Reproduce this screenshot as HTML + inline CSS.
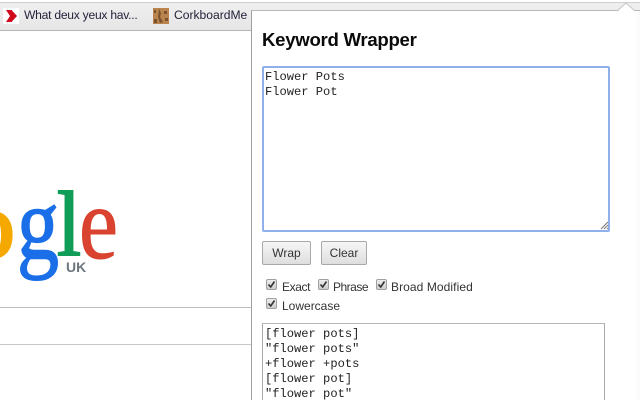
<!DOCTYPE html>
<html><head><meta charset="utf-8">
<style>
html,body{margin:0;padding:0;width:640px;height:400px;overflow:hidden;background:#fff;font-family:"Liberation Sans",sans-serif;color:#222}
#p{position:relative;width:640px;height:400px;overflow:hidden;background:#fff}
.a{position:absolute;white-space:pre}
.mono{font-family:"Liberation Mono",monospace;font-size:12.1px;line-height:15px;color:#222}
.btn{position:absolute;top:241px;height:24px;box-sizing:border-box;border:1px solid #a8a8a8;border-radius:2px;background:linear-gradient(#f6f6f6,#dedede);font-size:12px;line-height:23px;text-align:center;color:#333}
.cb{position:absolute;width:11px;height:11px;box-sizing:border-box;border:1px solid #a0a0a0;border-radius:2px;background:linear-gradient(#eee,#ccc)}
.cb svg{position:absolute;left:0;top:0}
.lb{position:absolute;font-size:12px;line-height:15px;color:#333;white-space:pre}
</style></head><body><div id="p">
<div class="a" style="left:0;top:2px;width:640px;height:1px;background:#cfcfcf"></div>
<div class="a" style="left:0;top:3px;width:640px;height:27px;background:linear-gradient(#efefef,#e6e6e6)"></div>
<div class="a" style="left:0;top:30px;width:640px;height:1px;background:#b4b4b4"></div>

<svg class="a" style="left:3px;top:8px" width="16" height="16" viewBox="0 0 16 16"><rect width="16" height="16" fill="#fff"/><path d="M3 2H8.5L14 8 8.5 14H3L7 8Z" fill="#d0081c"/></svg>
<div class="a" style="left:24px;top:8px;font-size:12.1px;line-height:15px;color:#23233a;letter-spacing:-.25px">What deux yeux hav...</div>
<svg class="a" style="left:153px;top:8px" width="16" height="16" viewBox="0 0 16 16"><rect width="16" height="16" fill="#b9844e"/><path d="M6 1l2 4-1 4 3 5-3 1-2-6zM11 3h3v3h-3zM1 11h3v4H1zM1 2h2v3H1zM12 10h3v3h-3z" fill="#7a5230"/></svg>
<div class="a" style="left:174px;top:8px;font-size:12.1px;line-height:15px;color:#23233a">CorkboardMe -</div>

<svg class="a" style="left:0;top:180px" width="130" height="105" viewBox="0 0 130 105">
<text x="-40" y="78" font-family="Liberation Serif" font-size="100" fill="#f5a800" stroke="#f5a800" stroke-width="1.5" textLength="56" lengthAdjust="spacingAndGlyphs">o</text>
<text x="17" y="78" font-family="Liberation Serif" font-size="103" fill="#1a6fe8" stroke="#1a6fe8" stroke-width="1.5" textLength="42" lengthAdjust="spacingAndGlyphs">g</text>
<text x="57" y="75" font-family="Liberation Serif" font-size="92" fill="#0f9d58" stroke="#0f9d58" stroke-width="2" textLength="24" lengthAdjust="spacingAndGlyphs">l</text>
<text x="79" y="78" font-family="Liberation Serif" font-size="103" fill="#d9432f" stroke="#d9432f" stroke-width="1" textLength="39" lengthAdjust="spacingAndGlyphs">e</text>
<text x="66" y="92" font-family="Liberation Sans" font-weight="bold" font-size="14" fill="#6d7680">UK</text>
</svg>

<div class="a" style="left:0;top:307px;width:252px;height:1px;background:#bdbdbd"></div>
<div class="a" style="left:0;top:344px;width:252px;height:1px;background:#c8c8c8"></div>

<div class="a" style="left:251px;top:10px;width:389px;height:390px;background:#fff;border-left:1px solid #a0a0a0;border-top:1px solid #b8b8b8;box-sizing:border-box"></div>
<div class="a" style="left:623px;top:11px;width:17px;height:389px;background:linear-gradient(90deg,#fff 60%,#fafafa)"></div>
<svg class="a" style="left:617px;top:3px" width="18" height="9" viewBox="0 0 18 9"><path d="M0 9L9 0 18 9Z" fill="#fff"/><path d="M0 8L9 0 18 8" fill="none" stroke="#c4c4c4"/></svg>

<div class="a" style="left:262px;top:29px;font-size:18.6px;line-height:22px;font-weight:bold;color:#0a0a0a;letter-spacing:-.28px">Keyword Wrapper</div>

<div class="a" style="left:262px;top:66px;width:348px;height:166px;box-sizing:border-box;border:2px solid #8fb0ea;border-radius:2px"></div>
<div class="a mono" style="left:265px;top:70px">Flower Pots
Flower Pot</div>
<svg class="a" style="left:600px;top:221px" width="9" height="9" viewBox="0 0 9 9"><path d="M1 8L8 1M4 8L8 4M7 8L8 7" stroke="#777" stroke-width="1" fill="none"/></svg>

<div class="btn" style="left:262px;width:49px">Wrap</div>
<div class="btn" style="left:321px;width:46px">Clear</div>

<div class="cb" style="left:266px;top:279px"><svg width="9" height="9" viewBox="0 0 9 9"><path d="M1.5 4.5L3.7 7 7.5 1.5" stroke="#333" stroke-width="1.6" fill="none"/></svg></div>
<div class="lb" style="left:282px;top:280px;letter-spacing:-.4px">Exact</div>
<div class="cb" style="left:318px;top:279px"><svg width="9" height="9" viewBox="0 0 9 9"><path d="M1.5 4.5L3.7 7 7.5 1.5" stroke="#333" stroke-width="1.6" fill="none"/></svg></div>
<div class="lb" style="left:333px;top:280px;letter-spacing:-.5px">Phrase</div>
<div class="cb" style="left:376px;top:279px"><svg width="9" height="9" viewBox="0 0 9 9"><path d="M1.5 4.5L3.7 7 7.5 1.5" stroke="#333" stroke-width="1.6" fill="none"/></svg></div>
<div class="lb" style="left:391px;top:280px;letter-spacing:.08px">Broad Modified</div>
<div class="cb" style="left:266px;top:298px"><svg width="9" height="9" viewBox="0 0 9 9"><path d="M1.5 4.5L3.7 7 7.5 1.5" stroke="#333" stroke-width="1.6" fill="none"/></svg></div>
<div class="lb" style="left:282px;top:299px">Lowercase</div>

<div class="a" style="left:262px;top:323px;width:343px;height:90px;box-sizing:border-box;border:1px solid #aaa;border-top:1px solid #b5b5b5"></div>
<div class="a mono" style="left:265px;top:327px">[flower pots]
"flower pots"
+flower +pots
[flower pot]
"flower pot"</div>
</div></body></html>
